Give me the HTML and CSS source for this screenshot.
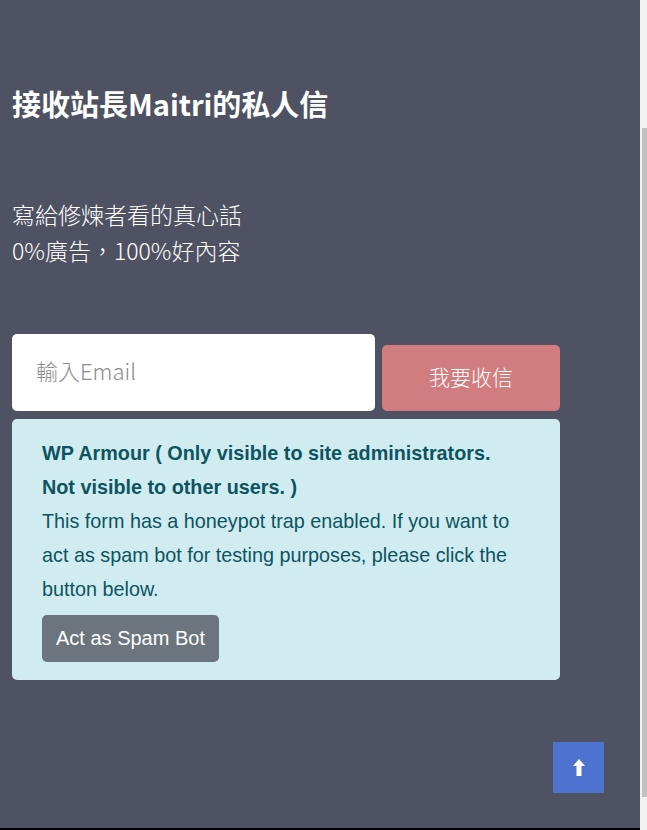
FILE: index.html
```html
<html lang="zh-Hant-TW">
    <head>
        <meta charset="utf-8">
        <link rel="stylesheet" href="styles.css">
        <title>接收站長Maitri的私人信</title>
    </head>
    <body>
        <section class="signup">
            <h2 class="signup-title">接收站長Maitri的私人信</h2>
            <p class="signup-text">寫給修煉者看的真心話<br>0%廣告，100%好內容</p>
            <form class="signup-form">
                <div class="form-row">
                    <input class="email-input" type="email" placeholder="輸入Email">
                    <button type="button" class="submit-btn">我要收信</button>
                </div>
                <!-- honeypot notice, admins only -->
                <div class="wpa-notice" lang="en">
                    <b>WP Armour ( Only visible to site administrators. Not visible to other users. )</b><br>
                    This form has a honeypot trap enabled. If you want to act as spam bot for testing purposes, please click the button below.<br>
                    <button type="button" class="spam-btn">Act as Spam Bot</button>
                </div>
            </form>
        </section>
        <footer class="site-footer"></footer>
        <a class="back-top" href="#">
            <svg width="12" height="17" viewBox="0 0 12 17"><path d="M6 0 L12 7 H8.5 V17 H3.5 V7 H0 Z" fill="#fff"/></svg>
        </a>
        <!-- window scrollbar -->
        <div class="scrollbar"><div class="scrollbar-thumb"></div></div>
    </body>
</html>
```

FILE: styles.css
```css
body          {margin: 0;
               background: #000;
               font-family: "Noto Sans CJK TC", "Noto Sans", sans-serif;}
.signup       {background: #4f5263;
               padding: 86px 12px 148px 12px;
               color: #fff;}
.signup-title {margin: 0;
               font-size: 29px;
               line-height: 34px;
               font-weight: bold;}
.signup-text  {margin: 76px 0 0 0;
               font-size: 23px;
               line-height: 36px;
               font-weight: 300;}
.signup-form  {margin: 66px 0 0 0;
               width: 548px;}
.form-row     {display: flex;
               align-items: flex-end;
               gap: 7px;}
.email-input  {width: 363px;
               height: 77px;
               border: none;
               border-radius: 5px;
               padding: 0 24px 5px 24px;
               box-sizing: border-box;
               font-family: "Noto Sans CJK TC", sans-serif;
               font-size: 22px;
               font-weight: 300;
               outline: none;}
.email-input::placeholder {color: #8c8c8c;}
.submit-btn   {width: 178px;
               height: 66px;
               border: none;
               border-radius: 5px;
               background: #d17c7e;
               color: #fff;
               font-family: "Noto Sans CJK TC", sans-serif;
               font-size: 21px;
               font-weight: 300;
               padding: 0 0 5px 0;}
.wpa-notice   {margin-top: 8px;
               background: #d1ecf1;
               color: #0c5460;
               border-radius: 5px;
               padding: 17px 34px 18px 30px;
               font-family: "Liberation Sans", Arial, sans-serif;
               font-size: 19.8px;
               line-height: 34px;}
.spam-btn     {margin-top: 9px;
               display: inline-block;
               background: #6c757d;
               color: #fff;
               border: none;
               border-radius: 5px;
               padding: 8px 14px;
               font-family: "Liberation Sans", Arial, sans-serif;
               font-size: 20px;
               line-height: 31px;
               vertical-align: top;}
.site-footer  {height: 42px;
               background: #000;}
.back-top     {position: fixed;
               right: 43px;
               bottom: 37px;
               width: 51px;
               height: 51px;
               background: #4e73cf;
               display: flex;
               align-items: center;
               justify-content: center;}
.scrollbar    {position: fixed;
               top: 0;
               right: 0;
               width: 7px;
               height: 100%;
               background: #f1f1f1;}
.scrollbar-thumb {margin: 128px 0 0 2px;
                  height: 669px;
                  background: #c1c1c1;}
```
